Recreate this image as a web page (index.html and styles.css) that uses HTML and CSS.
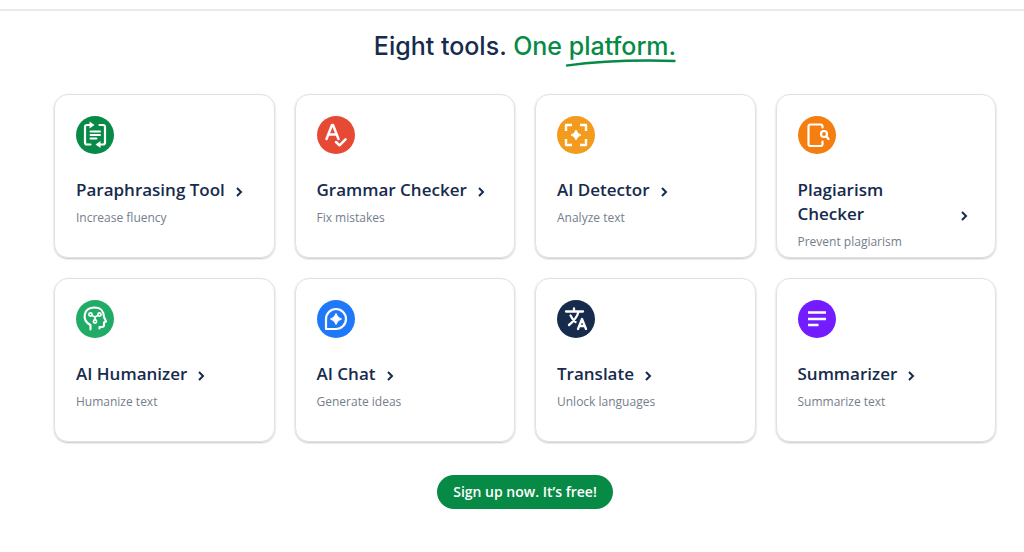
FILE: index.html
```html
<!DOCTYPE html>
<html lang="en">
<head>
  <meta charset="UTF-8" />
  <meta name="viewport" content="width=device-width, initial-scale=1.0" />
  <title>Eight tools. One platform.</title>
  <link rel="stylesheet" href="styles.css">
</head>
<body>
  <header class="topbar"></header>

  <main class="tools">
    <h1>Eight tools. <span class="green">One <span class="underlined">platform.<svg class="swoosh" viewBox="0 0 112 8" preserveAspectRatio="none" aria-hidden="true"><path d="M1 6.600C36 2 74 .8 111 2" /></svg></span></span></h1>

    <div class="grid">
      <a class="card" href="#paraphrasing-tool">
        <svg class="icon" viewBox="0 0 38 38" aria-hidden="true">
          <circle cx="19" cy="19" r="19" fill="#078a46" />
          <g fill="none" stroke="#fff" stroke-width="2.200" stroke-linecap="round" stroke-linejoin="round">
            <path d="M14 9h-3q-2 0-2 2v15.500q0 2 2 2h3.500" />
            <path d="M23.500 9h3.500q2 0 2 2v15.500q0 2-2 2h-3" />
            <path d="M14.500 15.500h9.500M14.500 19h9.500M14.500 22.500h6" stroke-width="1.900" />
          </g>
          <path d="M13.500 5.500l5 3.500-5 3.500zM24.500 25l-5 3.500 5 3.500z" fill="#fff" />
        </svg>
        <h2><span>Paraphrasing Tool</span><svg class="chevron" viewBox="0 0 20 20"><path d="M8 6l4 4-4 4" /></svg></h2>
        <p>Increase fluency</p>
      </a>

      <a class="card" href="#grammar-checker">
        <svg class="icon" viewBox="0 0 38 38" aria-hidden="true">
          <circle cx="19" cy="19" r="19" fill="#e64a35" />
          <g fill="none" stroke="#fff" stroke-width="2.500" stroke-linecap="round" stroke-linejoin="round">
            <path d="M9.500 23l5.500-14h1l5.500 14M11.500 18.500h8" />
            <path d="M19 26l3.500 3.300 6-6" />
          </g>
        </svg>
        <h2><span>Grammar Checker</span><svg class="chevron" viewBox="0 0 20 20"><path d="M8 6l4 4-4 4" /></svg></h2>
        <p>Fix mistakes</p>
      </a>

      <a class="card" href="#ai-detector">
        <svg class="icon" viewBox="0 0 38 38" aria-hidden="true">
          <circle cx="19" cy="19" r="19" fill="#f29b1d" />
          <path d="M9 15V9h6M23 9h6v6M29 23v6h-6M15 29H9v-6" fill="none" stroke="#fff" stroke-width="2.400" stroke-linejoin="round" />
          <path d="M19 14q1 4 5 5-4 1-5 5-1-4-5-5 4-1 5-5z" fill="#fff" stroke="#fff" stroke-linejoin="round" />
        </svg>
        <h2><span>AI Detector</span><svg class="chevron" viewBox="0 0 20 20"><path d="M8 6l4 4-4 4" /></svg></h2>
        <p>Analyze text</p>
      </a>

      <a class="card" href="#plagiarism-checker">
        <svg class="icon" viewBox="0 0 38 38" aria-hidden="true">
          <circle cx="19" cy="19" r="19" fill="#f57e10" />
          <g fill="none" stroke="#fff" stroke-width="2.200" stroke-linecap="round" stroke-linejoin="round">
            <path d="M24.500 11.500v-1q0-2-2-2h-10q-2 0-2 2v17.500q0 2 2 2h10q2 0 2-2v-2.500" />
            <circle cx="26" cy="18" r="3" />
            <path d="M28.500 20.500l2 2.500" />
          </g>
        </svg>
        <h2><span>Plagiarism Checker</span><svg class="chevron" viewBox="0 0 20 20"><path d="M8 6l4 4-4 4" /></svg></h2>
        <p>Prevent plagiarism</p>
      </a>

      <a class="card" href="#ai-humanizer">
        <svg class="icon" viewBox="0 0 38 38" aria-hidden="true">
          <circle cx="19" cy="19" r="19" fill="#20ab66" />
          <g fill="none" stroke="#fff" stroke-width="2.100" stroke-linecap="round" stroke-linejoin="round">
            <path d="M14.500 29.500v-4.500C5 20 7.500 7.500 18.500 7.500c6.500 0 9.500 4.500 9.500 9.500l2 4.500-2 1v2.500q0 2-2 2H23.500v1.500" />
            <g stroke-width="1.700">
              <circle cx="14.500" cy="14.500" r="1.600" />
              <circle cx="23.500" cy="14.500" r="1.600" />
              <circle cx="19" cy="21.500" r="1.600" />
              <path d="M16 15.500l3 1.500 3-1.500M19 17v3" />
            </g>
          </g>
        </svg>
        <h2><span>AI Humanizer</span><svg class="chevron" viewBox="0 0 20 20"><path d="M8 6l4 4-4 4" /></svg></h2>
        <p>Humanize text</p>
      </a>

      <a class="card" href="#ai-chat">
        <svg class="icon" viewBox="0 0 38 38" aria-hidden="true">
          <circle cx="19" cy="19" r="19" fill="#1f78fa" />
          <path d="M9 29V19a10 10 0 1 1 10 10z" fill="none" stroke="#fff" stroke-width="2.200" stroke-linejoin="round" />
          <path d="M19 13.500q1.200 4.300 5.500 5.500-4.300 1.200-5.500 5.500-1.200-4.300-5.500-5.500 4.300-1.200 5.500-5.500z" fill="#fff" stroke="#fff" stroke-linejoin="round" />
        </svg>
        <h2><span>AI Chat</span><svg class="chevron" viewBox="0 0 20 20"><path d="M8 6l4 4-4 4" /></svg></h2>
        <p>Generate ideas</p>
      </a>

      <a class="card" href="#translate">
        <svg class="icon" viewBox="0 0 38 38" aria-hidden="true">
          <circle cx="19" cy="19" r="19" fill="#172b4d" />
          <g fill="none" stroke="#fff" stroke-width="2.300" stroke-linecap="round" stroke-linejoin="round">
            <path d="M9 11.500h17M17 8.500v3M21.500 12c-1.500 5-5 9.500-9.500 13M13.500 15.500c1.500 3 3 5 5 6.500" />
            <path d="M21 29l4-10 4 10M22.500 26h5" />
          </g>
        </svg>
        <h2><span>Translate</span><svg class="chevron" viewBox="0 0 20 20"><path d="M8 6l4 4-4 4" /></svg></h2>
        <p>Unlock languages</p>
      </a>

      <a class="card" href="#summarizer">
        <svg class="icon" viewBox="0 0 38 38" aria-hidden="true">
          <circle cx="19" cy="19" r="19" fill="#731cff" />
          <path d="M10 12.500h18M10 19h18M10 25h10.500" fill="none" stroke="#fff" stroke-width="2.500" />
        </svg>
        <h2><span>Summarizer</span><svg class="chevron" viewBox="0 0 20 20"><path d="M8 6l4 4-4 4" /></svg></h2>
        <p>Summarize text</p>
      </a>
    </div>

    <a class="signup" href="#signup">Sign up now. It’s free!</a>
  </main>
</body>
</html>
```
FILE: styles.css
```css
* {
  box-sizing: border-box;
}
body {
  margin: 0;
  font-family: 'Open Sans', sans-serif;
  background: #fff;
  color: #172b4d;
}
.topbar {
  height: 11px;
  border-bottom: 2px solid #ebebeb;
}
.tools {
  display: flex;
  flex-direction: column;
  align-items: center;
  padding: 19px 28px 42px 54px;
}
h1 {
  margin: 0 0 32px;
  font-family: Inter, sans-serif;
  font-size: 25px;
  font-weight: 500;
  line-height: 32px;
}
.green {
  color: #078a46;
}
.underlined {
  position: relative;
}
.swoosh {
  position: absolute;
  left: -4px;
  bottom: -6px;
  width: calc(100% + 4px);
  height: 8px;
  fill: none;
  stroke: #078a46;
  stroke-width: 2.4;
}
.grid {
  display: grid;
  grid-template-columns: repeat(4, 1fr);
  grid-auto-rows: minmax(164px, auto);
  gap: 20px;
  width: 100%;
}
.card {
  padding: 21px 21px 5px;
  border: 1px solid #dfe1e5;
  border-radius: 14px;
  box-shadow: 0 1px 2px rgba(0,0,0,0.24);
  color: inherit;
  text-decoration: none;
}
.card:hover {
  border-color: #078a46;
}
.icon {
  display: block;
  width: 38px;
  height: 38px;
  margin-bottom: 24px;
}
h2 {
  display: flex;
  align-items: flex-end;
  gap: 4px;
  margin: 0;
  font-size: 17px;
  font-weight: 600;
  line-height: 24px;
}
.chevron {
  flex: none;
  width: 20px;
  height: 20px;
  fill: none;
  stroke: #172b4d;
  stroke-width: 2;
}
.card p {
  margin: 6px 0 0;
  font-size: 12px;
  line-height: 20px;
  color: #747e8c;
}
.signup {
  margin-top: 33px;
  padding: 0 16px;
  border-radius: 17px;
  background: #078a46;
  color: #fff;
  font-size: 14px;
  font-weight: 600;
  line-height: 34px;
  text-decoration: none;
}
.signup:hover {
  background: #06733a;
}
```
